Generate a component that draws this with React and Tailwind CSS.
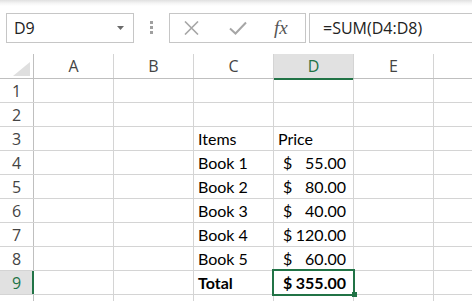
import React from "react";

const COLS = ["A", "B", "C", "D", "E", "F"];

const ROWS = [
  { n: 1 },
  { n: 2 },
  { n: 3, c: "Items", d: "Price", plain: true },
  { n: 4, c: "Book 1", d: "55.00" },
  { n: 5, c: "Book 2", d: "80.00" },
  { n: 6, c: "Book 3", d: "40.00" },
  { n: 7, c: "Book 4", d: "120.00" },
  { n: 8, c: "Book 5", d: "60.00" },
  { n: 9, c: "Total", d: "355.00", bold: true, sel: true },
  { n: 10, hideNum: true },
];

const uiFont = { fontFamily: '"Open Sans", "Noto Sans", sans-serif' };
const cellFont = { fontFamily: 'Lato, "Open Sans", sans-serif' };

function Cell({ children, className = "" }) {
  return (
    <div
      className={
        "w-[80px] shrink-0 h-full border-r border-[#d4d4d4] flex items-end pb-[2px] text-[16px] leading-[18px] text-black " +
        className
      }
      style={cellFont}
    >
      {children}
    </div>
  );
}

export default function App() {
  return (
    <div className="w-[472px] h-[301px] overflow-hidden bg-white">
      {/* Formula bar */}
      <div className="h-[54px] bg-[linear-gradient(to_bottom,#e0e0e0_0px,#f4f4f4_3px,#ffffff_6px)] flex items-start pt-[13px] pl-[6px]">
        <div
          className="w-[128px] h-[30px] shrink-0 border border-[#c6c6c6] bg-white flex items-center justify-between pl-[7px] pr-[9px] text-[16px] text-[#222]"
          style={uiFont}
        >
          <span>D9</span>
          <svg width="7" height="4" viewBox="0 0 7 4">
            <path d="M0 0 H7 L3.5 4 Z" fill="#6a6a6a" />
          </svg>
        </div>
        <div className="ml-[16px] mt-[8px] flex flex-col gap-[2px] shrink-0">
          <div className="w-[3px] h-[3px] bg-[#a0a0a0]" />
          <div className="w-[3px] h-[3px] bg-[#a0a0a0]" />
          <div className="w-[3px] h-[3px] bg-[#a0a0a0]" />
        </div>
        <div className="ml-[16px] w-[137px] h-[30px] shrink-0 border border-[#c6c6c6] bg-white flex items-center pl-[14px]">
          <svg width="15" height="14" viewBox="0 0 15 14">
            <path d="M1 0.5 L14 13.5 M14 0.5 L1 13.5" stroke="#a6a6a6" strokeWidth="1.6" fill="none" />
          </svg>
          <svg className="ml-[30px]" width="18" height="14" viewBox="0 0 18 14">
            <path d="M1 7.5 L6.5 12.5 L17 1.5" stroke="#a6a6a6" strokeWidth="2" fill="none" />
          </svg>
          <span
            className="ml-[27px] text-[19px] italic text-[#555] leading-none -mt-[2px]"
            style={{ fontFamily: '"Liberation Serif", "DejaVu Serif", serif' }}
          >
            fx
          </span>
        </div>
        <div
          className="ml-[3px] flex-1 h-[30px] border border-r-0 border-[#c6c6c6] bg-white flex items-center pl-[13px] text-[16px] text-[#222]"
          style={uiFont}
        >
          =SUM(D4:D8)
        </div>
      </div>

      {/* Grid */}
      <div className="relative">
        {/* Column header */}
        <div className="flex h-[25px] border-b border-[#bfbfbf]" style={uiFont}>
          <div className="w-[34px] shrink-0 h-full border-r border-[#bfbfbf] flex items-end justify-end pr-[3px] pb-[2px]">
            <svg width="17" height="14" viewBox="0 0 17 14">
              <path d="M17 0 V14 H0 Z" fill="#dfdfdf" />
            </svg>
          </div>
          {COLS.map((c) =>
            c === "D" ? (
              <div
                key={c}
                className="w-[80px] shrink-0 h-[26px] -mb-px bg-[#e1e1e1] border-r border-[#d4d4d4] border-b-2 border-b-[#217346] flex items-center justify-center text-[16px] text-[#217346] pb-[1px]"
              >
                {c}
              </div>
            ) : (
              <div
                key={c}
                className={
                  "w-[80px] shrink-0 h-full border-r border-[#d4d4d4] flex items-center justify-center text-[16px] text-[#444] " +
                  (c === "F" ? "pl-[6px]" : "")
                }
              >
                {c}
              </div>
            )
          )}
        </div>

        {/* Rows */}
        {ROWS.map((r) => (
          <div key={r.n} className="flex h-[24px] border-b border-[#d4d4d4]">
            <div
              className={
                "w-[34px] shrink-0 h-full flex items-center justify-center text-[16px] " +
                (r.sel
                  ? "bg-[#e1e1e1] border-r-2 border-[#217346] text-[#217346] pl-[1px]"
                  : "border-r border-[#bfbfbf] text-[#444]")
              }
              style={uiFont}
            >
              {r.hideNum ? "" : r.n}
            </div>
            <Cell />
            <Cell />
            <Cell className={"pl-[4px] " + (r.bold ? "font-bold" : "")}>{r.c}</Cell>
            <Cell className={r.bold ? "font-bold" : ""}>
              {r.d &&
                (r.plain ? (
                  <span className="pl-[4px]">{r.d}</span>
                ) : (
                  <div className="w-full flex justify-between pl-[9px] pr-[7px]">
                    <span>$</span>
                    <span>{r.d}</span>
                  </div>
                ))}
            </Cell>
            <Cell />
            <Cell />
          </div>
        ))}

        {/* Selection */}
        <div className="absolute left-[272px] top-[215px] w-[83px] h-[27px] border-2 border-[#217346] pointer-events-none" />
        <div className="absolute left-[352px] top-[238px] w-[5px] h-[5px] bg-[#217346] pointer-events-none" />
      </div>
    </div>
  );
}
